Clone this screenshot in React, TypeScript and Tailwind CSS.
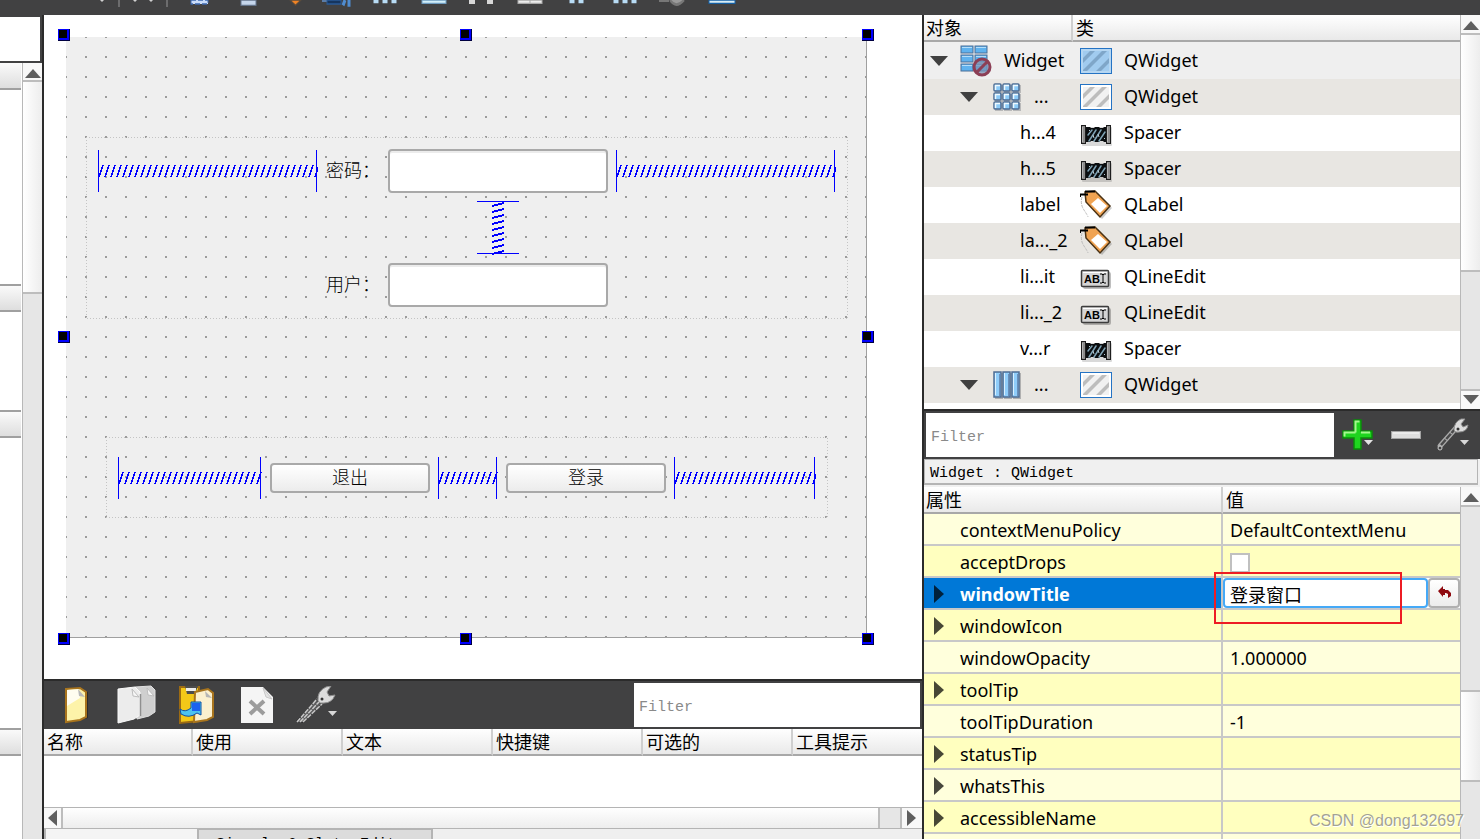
import type { ReactNode } from "react";

type ObjectRow = {
  name: string;
  className: string;
  level: number;
  icon: ReactNode;
  layout?: ReactNode;
};

type PropertyRow = {
  name: string;
  value?: string;
  expandable?: boolean;
  kind?: "check" | "edit";
};

const headerCell =
  "bg-linear-to-b from-white to-[#e9e9e9] border-b-2 border-[#a8a8a8] pt-0.5 text-left font-normal leading-[23px] whitespace-nowrap";

const LayoutBrokenIcon = () => (
  <svg width="32" height="32" viewBox="0 0 32 32">
    {[0, 9, 18].map((y) => (
      <g key={y}>
        <rect x="1" y={y + 1} width="12" height="7" fill="#5fb2ee" stroke="#4a6f98" />
        <rect x="15" y={y + 1} width="12" height="7" fill="#5fb2ee" stroke="#4a6f98" />
        <path d={`M2 ${y + 2.5}h10M16 ${y + 2.5}h10`} stroke="#b4defa" />
      </g>
    ))}
    <circle cx="22" cy="22" r="8" fill="#7a91b5" fillOpacity="0.75" stroke="#8c3f56" strokeWidth="3" />
    <path d="M16.500 27.500L27.500 16.500" stroke="#8c3f56" strokeWidth="3" />
  </svg>
);

const GridLayoutIcon = () => (
  <svg width="28" height="28" viewBox="0 0 28 28">
    {[0, 9, 18].map((y) =>
      [0, 9, 18].map((x) => (
        <g key={`${x}-${y}`}>
          <rect x={x + 2} y={y + 2} width="8" height="8" fill="#b9b9b9" />
          <rect x={x + 1} y={y + 1} width="7" height="7" rx="1" fill="#8ccbf8" stroke="#4f6d94" strokeWidth="1.500" />
          <path d={`M${x + 2.5} ${y + 7}v-4.500h4.500`} stroke="#eef9ff" strokeWidth="1.500" fill="none" />
        </g>
      )),
    )}
  </svg>
);

const HorizontalLayoutIcon = () => (
  <svg width="28" height="28" viewBox="0 0 28 28">
    {[0, 9, 18].map((x) => (
      <g key={x}>
        <rect x={x + 2} y="2" width="8" height="26" fill="#b0b0b0" />
        <rect x={x + 1} y="1" width="7" height="25" fill="#8fcdfa" stroke="#4f6d94" strokeWidth="1.500" />
        <path d={`M${x + 2.5} 2v22`} stroke="#d9f0ff" />
        <path d={`M${x + 6.5} 3v22`} stroke="#6a8fba" />
      </g>
    ))}
  </svg>
);

const WidgetIcon = ({ selected = false }: { selected?: boolean }) => (
  <svg width="32" height="26" viewBox="0 0 32 26">
    <rect x="0.500" y="0.500" width="31" height="25" fill={selected ? "#b5d6f2" : "#fff"} stroke="#2473c4" />
    <rect x="3" y="3" width="26" height="20" fill={selected ? "#a1cbef" : "#f1f1f1"} />
    <path
      d="M3 10V15L15 3H10zM3 23H7L27 3H22L3 22zM16 23H21L29 15V10z"
      fill={selected ? "#7fa6c9" : "#bdbdbd"}
    />
  </svg>
);

const SpacerIcon = () => (
  <svg width="32" height="24" viewBox="0 0 32 24">
    <rect x="2" y="4" width="30" height="19" rx="1" fill="#000" fillOpacity="0.150" />
    <path d="M6 4h4l1 1h3l1-1h4l1 1h3l1-1h3v15h-3l-1-1h-3l-1 1h-4l-1-1h-3l-1 1H6z" fill="#0b0e10" />
    <path
      d="M8 12l4-5M9 18L16 7M14 18L21 7M19 18L25 9"
      stroke="#7fa3b5"
      strokeWidth="1.500"
      strokeLinecap="round"
      fill="none"
    />
    <path d="M9 7l1 1M13 12l1 3M18 11l1 3M24 15l1 1" stroke="#b9cbd4" />
    <rect x="1.500" y="2.500" width="4" height="18" fill="#8b8b8b" stroke="#1e1e1e" />
    <rect x="26.500" y="2.500" width="4" height="18" fill="#8b8b8b" stroke="#1e1e1e" />
    <path d="M2.500 4v15M27.500 4v15" stroke="#b5b5b5" />
  </svg>
);

const LabelIcon = () => (
  <svg width="32" height="30" viewBox="0 0 32 30">
    <path d="M7 4L18 3L32 18L22 29L8 14z" fill="#000" fillOpacity="0.200" />
    <path d="M5 2L15 1L30 16L20 27L6 12z" fill="#f0a352" stroke="#4a3214" strokeWidth="1.500" />
    <path d="M11 14L18 8L27 16L20 23z" fill="#fff" />
    <path d="M0 4.500H8M0 4v3M5 1.500h10" stroke="#000" strokeWidth="2" fill="none" />
    <path d="M2 7Q0 14 4 20T8 27" stroke="#b9b9b9" fill="none" strokeDasharray="3 1" />
  </svg>
);

const LineEditIcon = () => (
  <svg width="32" height="22" viewBox="0 0 32 22">
    <rect x="3" y="4" width="28" height="17" rx="2" fill="#000" fillOpacity="0.250" />
    <rect x="1.500" y="2.500" width="27" height="16" rx="1" fill="#d5d5d5" stroke="#3c3c3c" strokeWidth="1.500" />
    <path d="M3 4.500h24" stroke="#fff" />
    <text x="4" y="15" fontSize="11" fontWeight="700" fontFamily="Liberation Sans, sans-serif" fill="#000">
      AB
    </text>
    <path d="M20 6h2l1 1l1-1h2M23 7v7M20 15h2l1-1l1 1h2" stroke="#000" fill="none" />
  </svg>
);

const WrenchIcon = () => (
  <svg width="44" height="38" viewBox="0 0 44 38">
    <path d="M1 35L22 13L28 17L8 37" fill="#2e2e2f" />
    <path d="M2 36L21 14L26 18L8 36" fill="#5a5a5b" />
    <path d="M2 36L22 13M5 36L24 16M8 36L27 18" stroke="#c9c9c9" strokeWidth="1.500" strokeDasharray="5 1" fill="none" />
    <path
      d="M23 15Q22 5 31 1L36 0L32 6L34 10L40 9Q37 17 29 17Q25 18 23 15z"
      fill="#dcdcdc"
      stroke="#8f8f8f"
    />
    <circle cx="27" cy="13" r="1.500" fill="#333" />
    <path d="M33 25h9l-4.500 5z" fill="#d8d8d8" />
  </svg>
);

const SmallWrenchIcon = () => (
  <svg width="34" height="34" viewBox="0 0 34 34">
    <path d="M4 28L20 10" stroke="#aaa" strokeWidth="5" strokeLinecap="round" />
    <path d="M5 27L19 11" stroke="#4a4a4b" strokeWidth="2.500" strokeDasharray="7 1" />
    <path d="M18 12Q18 4 25 1L29 1L25 6L27 9L32 7Q31 14 23 14Q19 15 18 12z" fill="#dcdcdc" stroke="#8f8f8f" />
    <circle cx="4" cy="30" r="2" fill="#414142" stroke="#ccc" />
    <circle cx="22" cy="11" r="1.500" fill="#333" />
    <path d="M24 22h9l-4.500 5z" fill="#d8d8d8" />
  </svg>
);

const PlusIcon = () => (
  <svg width="32" height="32" viewBox="0 0 32 32">
    <path d="M12 1h7v11h11v7H19v11h-7V19H1v-7h11z" fill="#1fd41f" stroke="#0b8a0b" strokeWidth="1.500" />
    <path d="M13.500 13.500V2.500h4M2.500 17.500v-4h11M19 13.500h9" stroke="#a5f78f" strokeWidth="2" fill="none" />
    <path d="M22 21h9l-4.500 5z" fill="#e3e3e3" />
  </svg>
);

const MinusIcon = () => (
  <svg width="30" height="10" viewBox="0 0 30 10">
    <rect x="0.500" y="1.500" width="29" height="7" fill="#dedede" stroke="#a3a3a3" />
    <path d="M2 3h26" stroke="#f7f7f7" />
  </svg>
);

const NewIcon = () => (
  <svg width="26" height="38" viewBox="0 0 26 38">
    <path d="M4 37L24 32V6L18 4" fill="#2c2c2c" />
    <path d="M2 3L16 2L22 6V31L16 34L2 36z" fill="#fdf3a9" stroke="#a8741d" strokeWidth="2" />
    <path d="M3 4L15 3L16 12L3 20z" fill="#fffdf0" />
    <path d="M14 3L21 11L15 10z" fill="#b9b9b9" />
  </svg>
);

const CopyIcon = () => (
  <svg width="40" height="40" viewBox="0 0 40 40">
    <path d="M18 2L34 1L38 5V27L32 31L20 34z" fill="#cfcfcf" stroke="#e0e0e0" />
    <path d="M1 4L18 2L23 7V30L17 34L1 38z" fill="#ececec" stroke="#fafafa" />
    <path d="M23.500 9v22" stroke="#8f8f8f" strokeWidth="1.500" />
    <path d="M15 4L22 12L16 11zM30 3L37 11L31 10z" fill="#f7f7f7" stroke="#bdbdbd" />
  </svg>
);

const PasteIcon = () => (
  <svg width="36" height="40" viewBox="0 0 36 40">
    <path d="M1 2H20V36L1 38z" fill="#f3c818" stroke="#9c6b13" strokeWidth="2" />
    <path d="M6 1H19L16 9H8z" fill="#4c4c4c" />
    <path d="M7 3H17V6H7z" fill="#ededed" />
    <path d="M16 7L29 4L34 8V32L28 35L15 37z" fill="#fbf0cf" stroke="#a8741d" strokeWidth="2" />
    <path d="M26 6L33 13L27 12z" fill="#b5b5b5" />
    <path d="M1 24Q6 28 12 23V17H22V30L18 28Q10 34 2 29z" fill="#4cc3f0" stroke="#0e4fa5" />
    <rect x="13" y="18" width="8" height="8" fill="#1c62f0" />
  </svg>
);

const DeleteIcon = () => (
  <svg width="32" height="36" viewBox="0 0 32 36">
    <path d="M0 0H22L32 10V36H0z" fill="#f5f5f5" />
    <path d="M22 1L31 12L25 10z" fill="#e3e3e3" stroke="#c9c9c9" />
    <path d="M9 14l14 13M23 14L9 27" stroke="#9c9c9c" strokeWidth="4" />
  </svg>
);

const ResetIcon = () => (
  <svg width="16" height="14" viewBox="0 0 16 14">
    <path d="M2 5L7 0V3H9V4H12L15 7V10L12 12V8L10 7H9V9H7V11z" fill="#8f0a10" />
  </svg>
);

// only the lower edge of the main tool bar is visible
const mainTools: ReactNode[] = [
  <path key="a" d="M15 0h17v3H15z" fill="#c9dcfa" stroke="#3c68b0" strokeDasharray="5 2" />,
  <path key="b" d="M17 0h15v4H17z" fill="#c5d6ec" stroke="#64748b" />,
  <path key="c" d="M18 0h11l-5.500 4z" fill="#f08325" stroke="#5a4b3c" />,
  <g key="d">
    <path d="M8 0h5v1.500H8z" fill="#5a7ca8" />
    <path d="M13 0h14v3H13z" fill="#16355e" stroke="#2a5a96" />
    <path d="M29 4l2-4M35 5V0" stroke="#4f8cd0" strokeWidth="3" />
  </g>,
  <path key="e" d="M14 0v2.500M23 0v2.500M32 0v2.500" stroke="#b8dcf5" strokeWidth="5" />,
  <path key="f" d="M12 0h24v2.500H12z" fill="#d3f0fb" stroke="#6f9cc0" />,
  <path key="g" d="M14 0v3M32 0v3" stroke="#d8d8d8" strokeWidth="6" />,
  <path key="h" d="M12 0h24v2.500H12zM24 0v2.500" fill="#ededed" stroke="#a9a9a9" />,
  <path key="i" d="M18 0v2.500M27 0v2.500" stroke="#b8dcf5" strokeWidth="5" />,
  <path key="j" d="M14 0v2.500M23 0v2.500M32 0v2.500" stroke="#b8dcf5" strokeWidth="5" />,
  <path key="k" d="M9 .5h10M20 0q6 7 14 0" fill="#9a9a9a" stroke="#777" strokeWidth="2" />,
  <path key="l" d="M11 0h26v2.500H11z" fill="#d9eef7" stroke="#1560a5" />,
];

const objects: ObjectRow[] = [
  { name: "Widget", className: "QWidget", level: 0, icon: <WidgetIcon selected />, layout: <LayoutBrokenIcon /> },
  { name: "...", className: "QWidget", level: 1, icon: <WidgetIcon />, layout: <GridLayoutIcon /> },
  { name: "h...4", className: "Spacer", level: 2, icon: <SpacerIcon /> },
  { name: "h...5", className: "Spacer", level: 2, icon: <SpacerIcon /> },
  { name: "label", className: "QLabel", level: 2, icon: <LabelIcon /> },
  { name: "la..._2", className: "QLabel", level: 2, icon: <LabelIcon /> },
  { name: "li...it", className: "QLineEdit", level: 2, icon: <LineEditIcon /> },
  { name: "li..._2", className: "QLineEdit", level: 2, icon: <LineEditIcon /> },
  { name: "v...r", className: "Spacer", level: 2, icon: <SpacerIcon /> },
  { name: "...", className: "QWidget", level: 1, icon: <WidgetIcon />, layout: <HorizontalLayoutIcon /> },
];

const properties: PropertyRow[] = [
  { name: "contextMenuPolicy", value: "DefaultContextMenu" },
  { name: "acceptDrops", kind: "check" },
  { name: "windowTitle", value: "登录窗口", expandable: true, kind: "edit" },
  { name: "windowIcon", expandable: true },
  { name: "windowOpacity", value: "1.000000" },
  { name: "toolTip", expandable: true },
  { name: "toolTipDuration", value: "-1" },
  { name: "statusTip", expandable: true },
  { name: "whatsThis", expandable: true },
  { name: "accessibleName", expandable: true },
  { name: "" },
];

const actionColumns = ["名称", "使用", "文本", "快捷键", "可选的", "工具提示"];

const handles = [
  "-left-2 -top-2",
  "left-1/2 -top-2 -translate-x-1.5",
  "-right-2 -top-2",
  "-left-2 top-1/2 -translate-y-1.5",
  "-right-2 top-1/2 -translate-y-1.5",
  "-left-2 -bottom-2",
  "left-1/2 -bottom-2 -translate-x-1.5",
  "-right-2 -bottom-2",
];

const HSpring = ({ className = "" }: { className?: string }) => (
  <svg className={`h-[42px] ${className}`} shapeRendering="crispEdges">
    <defs>
      <pattern id="coil-h" width="6" height="12" y="15" patternUnits="userSpaceOnUse">
        <path d="M-5 12L-1 0M1 12L5 0M7 12L11 0" stroke="#00f" strokeWidth="1.500" />
      </pattern>
    </defs>
    <rect y="15" width="100%" height="12" fill="url(#coil-h)" />
    <rect width="1" height="42" fill="#00f" />
    <svg x="100%" className="overflow-visible">
      <rect x="-2" width="1" height="42" fill="#00f" />
    </svg>
  </svg>
);

const VSpring = () => (
  <svg className="w-[42px] h-[54px]" shapeRendering="crispEdges">
    <defs>
      <pattern id="coil-v" width="12" height="6" x="15" patternUnits="userSpaceOnUse">
        <path d="M0 -1L12 -4M0 5L12 2M0 11L12 8" stroke="#00f" strokeWidth="2" />
      </pattern>
    </defs>
    <rect x="15" width="12" height="54" fill="url(#coil-v)" />
    <rect width="42" height="1" fill="#00f" />
    <rect y="52" width="42" height="1" fill="#00f" />
  </svg>
);

const DottedFrame = () => (
  <svg className="absolute inset-0 w-full h-full" shapeRendering="crispEdges">
    <rect width="100%" height="100%" fill="none" stroke="#c4c4c4" strokeWidth="2" strokeDasharray="1 2" />
  </svg>
);

const SnapGrid = () => (
  <svg className="absolute inset-0 w-full h-full" shapeRendering="crispEdges">
    <defs>
      <pattern id="snap-grid" x="-1" y="-1" width="20" height="20" patternUnits="userSpaceOnUse">
        <rect width="2" height="2" fill="#9c9c9c" />
      </pattern>
    </defs>
    <rect width="100%" height="100%" fill="url(#snap-grid)" />
  </svg>
);

const Arrow = ({ dir }: { dir: "up" | "down" | "left" | "right" }) => {
  const paths = {
    up: "M8 3L16 12H0z",
    down: "M8 12L16 3H0z",
    left: "M3 8L12 0V16z",
    right: "M12 8L3 0V16z",
  };
  return (
    <svg width="16" height="16" viewBox="0 0 16 16" className="shrink-0">
      <path d={paths[dir]} fill="#5e5e5e" />
    </svg>
  );
};

const Expander = ({ open = false }: { open?: boolean }) =>
  open ? (
    <svg width="18" height="10" viewBox="0 0 18 10">
      <path d="M0 0H18L9 10z" fill="#404040" />
    </svg>
  ) : (
    <svg width="10" height="18" viewBox="0 0 10 18">
      <path d="M0 0V18L10 9z" fill="#000" fillOpacity="0.720" />
    </svg>
  );

const FilterInput = ({ label, className }: { label: string; className: string }) => (
  <input
    type="text"
    aria-label={label}
    placeholder="Filter"
    className={`h-11 bg-white px-[5px] pt-1 outline-none font-['Liberation_Mono','Noto_Sans_CJK_SC',monospace] text-[15px] placeholder:text-[#8a8a8a] ${className}`}
  />
);

const IconButton = ({ label, className, children }: { label: string; className: string; children: ReactNode }) => (
  <button type="button" aria-label={label} className={`flex items-center justify-center ${className}`}>
    {children}
  </button>
);

const MainToolBar = () => (
  <header className="h-[15px] shrink-0 flex bg-[#414142] overflow-hidden">
    <svg width="176" height="8" viewBox="0 0 176 8" className="shrink-0">
      <path d="M100 0h4l-2 2zM133 0h4l-2 2zM149 0h4l-2 2z" fill="#d0d0d0" />
      <path d="M119 0v7M167 0v7" stroke="#6c6c6d" strokeWidth="2" />
    </svg>
    {mainTools.map((glyph, i) => (
      <svg
        key={i}
        height="8"
        viewBox="0 0 48 6"
        preserveAspectRatio="none"
        className={i === 3 ? "-ml-1.5 w-12 shrink-0" : "w-12 shrink-0"}
      >
        {glyph}
      </svg>
    ))}
  </header>
);

const WidgetBox = () => (
  <aside className="w-[42px] shrink-0 flex flex-col bg-[#414142] pt-0.5">
    <input type="text" aria-label="Widget filter" className="h-11 w-10 bg-white outline-none mb-0.5" />
    <div className="flex-1 min-h-0 flex bg-white overflow-hidden">
      <div className="w-[22px] flex flex-col pr-px">
        <div className="h-[27px] shrink-0 bg-linear-to-b from-[#fafafa] to-[#dedede] border-b-2 border-[#a0a0a0]" />
        <div className="h-[194px] shrink-0" />
        <div className="h-7 shrink-0 bg-linear-to-b from-[#fafafa] to-[#dedede] border-y-2 border-[#a0a0a0]" />
        <div className="h-[98px] shrink-0" />
        <div className="h-7 shrink-0 bg-linear-to-b from-[#fafafa] to-[#dedede] border-y-2 border-[#a0a0a0]" />
        <div className="h-[290px] shrink-0" />
        <div className="h-7 shrink-0 bg-linear-to-b from-[#fafafa] to-[#dedede] border-y-2 border-[#a0a0a0]" />
      </div>
      <div className="flex-1 flex flex-col border-l border-[#b8b8b8] bg-[#e6e6e6]">
        <div className="h-[19px] pt-1 flex items-center justify-center bg-[#f8f8f8] border-b-2 border-[#bdbdbd]">
          <Arrow dir="up" />
        </div>
        <div className="h-[212px] bg-linear-to-r from-white to-[#ededed] border-b-2 border-[#bdbdbd]" />
      </div>
    </div>
  </aside>
);

const formLabel = "text-lg leading-6 pb-0.5 font-light whitespace-nowrap text-black";
const formInput =
  "h-11 w-full min-w-0 rounded-[4px] border-2 border-[#a9a9a9] bg-white px-2 shadow-[inset_0_2px_0_#ececec] outline-none";
const formButton =
  "w-40 h-[30px] shrink-0 rounded-[4px] border-2 border-[#a9a9a9] bg-linear-to-b from-white to-[#ececec] pb-0.5 text-lg leading-6 font-light";

const FormCanvas = () => (
  <main className="flex-1 min-h-0 bg-white pt-[22px] pl-[22px] overflow-hidden">
    <div className="relative w-[801px] h-[601px] border-r border-b border-[#a0a0a0] bg-[#efefef]">
      <SnapGrid />
      <div className="absolute left-5 top-[100px] w-[762px] p-3 grid grid-cols-[1fr_54px_1fr_1fr] gap-2 items-center">
        <DottedFrame />
        <HSpring className="w-full" />
        <label htmlFor="password" className={formLabel}>
          密码：
        </label>
        <input id="password" type="text" className={`relative ${formInput}`} />
        <HSpring className="w-full" />
        <div className="col-start-3 flex justify-center">
          <VSpring />
        </div>
        <label htmlFor="user" className={`col-start-2 ${formLabel}`}>
          用户：
        </label>
        <input id="user" type="text" className={`relative ${formInput}`} />
      </div>
      <div className="absolute left-10 top-[400px] w-[722px] h-[81px] px-3 flex gap-2 items-center">
        <DottedFrame />
        <HSpring className="w-36" />
        <button type="button" className={formButton}>
          退出
        </button>
        <HSpring className="w-15" />
        <button type="button" className={formButton}>
          登录
        </button>
        <HSpring className="flex-1 min-w-0" />
      </div>
      {handles.map((place) => (
        <span key={place} className={`absolute size-3 bg-[#00f] border-r border-b border-[#000040] pl-px pt-px ${place}`}>
          <span className="block size-2 bg-black" />
        </span>
      ))}
    </div>
  </main>
);

const ActionEditor = () => (
  <section className="h-40 shrink-0 flex flex-col bg-white overflow-hidden">
    <div className="h-[50px] shrink-0 flex items-center bg-[#414142] border-t-2 border-[#2b2b2b] pl-[3px] pr-0.5">
      <IconButton label="New" className="w-15 h-full">
        <NewIcon />
      </IconButton>
      <IconButton label="Copy" className="w-15 h-full">
        <CopyIcon />
      </IconButton>
      <IconButton label="Paste" className="w-15 h-full">
        <PasteIcon />
      </IconButton>
      <IconButton label="Delete" className="w-15 h-full">
        <DeleteIcon />
      </IconButton>
      <IconButton label="Configure" className="w-15 h-full">
        <WrenchIcon />
      </IconButton>
      <FilterInput label="Action filter" className="w-[286px] ml-auto" />
    </div>
    <table className="w-full table-fixed border-separate border-spacing-0 text-lg leading-6">
      <thead>
        <tr>
          {actionColumns.map((col, i) => (
            <th
              key={col}
              className={`h-[27px] pl-[3px] ${headerCell} ${
                i === actionColumns.length - 1
                  ? ""
                  : i === 0
                    ? "w-[149px] border-r-2 border-r-[#cfcfcf]"
                    : "w-[150px] border-r-2 border-r-[#cfcfcf]"
              }`}
            >
              {col}
            </th>
          ))}
        </tr>
      </thead>
    </table>
    <div className="flex-1" />
    <div className="h-[22px] shrink-0 flex border-y border-[#b4b4b4] bg-[#e6e6e6]">
      <div className="w-[19px] flex items-center justify-center bg-[#f8f8f8] border-r-2 border-[#bdbdbd]">
        <Arrow dir="left" />
      </div>
      <div className="flex-1 bg-linear-to-b from-white to-[#ededed] border-r-2 border-[#bdbdbd]" />
      <div className="w-[22px] border-r-2 border-[#bdbdbd]" />
      <div className="w-5 flex items-center justify-center bg-[#f8f8f8]">
        <Arrow dir="right" />
      </div>
    </div>
    <div className="h-2.5 shrink-0 flex bg-[#efefef] overflow-hidden font-['Liberation_Mono',monospace] text-[15px] leading-5">
      <button type="button" className="w-[153px] h-7 shrink-0 border-l-2 border-[#b4b4b4] bg-[#f4f4f4] pt-2">
        Action Editor
      </button>
      <button
        type="button"
        className="w-[236px] h-7 shrink-0 border-x-2 border-t border-[#b4b4b4] bg-[#dcdcdc] pt-0.5 whitespace-nowrap"
      >
        Signals &amp; Slots Editor
      </button>
    </div>
  </section>
);

const ObjectInspector = () => (
  <section className="h-[394px] shrink-0 flex bg-white">
    <div className="flex-1 min-w-0">
      <table className="w-full table-fixed border-separate border-spacing-0 text-lg leading-6">
        <thead>
          <tr>
            <th className={`w-[149px] h-[27px] pl-0.5 border-r-2 border-r-[#cfcfcf] ${headerCell}`}>对象</th>
            <th className={`pl-[3px] ${headerCell}`}>类</th>
          </tr>
        </thead>
        <tbody>
          {objects.map((row, i) => (
            <tr
              key={i}
              className={i === 0 ? "h-[37px] bg-[#efefef]" : i % 2 === 1 ? "h-9 bg-[#e8e6e2]" : "h-9 bg-white"}
            >
              <td className="p-0">
                <div
                  className={`flex items-center ${
                    row.level === 0 ? "pl-1.5" : row.level === 1 ? "pl-9" : "pl-24"
                  }`}
                >
                  {row.layout && (
                    <>
                      <Expander open />
                      <span className={row.level === 0 ? "ml-3 mr-3" : "ml-[15px] mr-[13px]"}>{row.layout}</span>
                    </>
                  )}
                  <span className="pb-0.5 whitespace-nowrap">{row.name}</span>
                </div>
              </td>
              <td className="p-0 pl-[7px]">
                <div className="flex items-center gap-3">
                  <span className={row.level === 2 && row.className !== "QLabel" ? "pt-1" : ""}>{row.icon}</span>
                  <span className="pb-0.5">{row.className}</span>
                </div>
              </td>
            </tr>
          ))}
        </tbody>
      </table>
    </div>
    <div className="w-5 flex flex-col border-l border-[#b8b8b8] bg-[#e6e6e6]">
      <div className="h-5 pt-1 flex items-center justify-center bg-[#f8f8f8] border-b-2 border-[#bdbdbd]">
        <Arrow dir="up" />
      </div>
      <div className="h-[237px] bg-linear-to-r from-white to-[#ededed] border-b-2 border-[#bdbdbd]" />
      <div className="flex-1" />
      <div className="h-5 flex items-center justify-center bg-[#f8f8f8] border-t-2 border-[#bdbdbd]">
        <Arrow dir="down" />
      </div>
    </div>
  </section>
);

const PropertyEditor = () => (
  <section className="flex-1 min-h-0 flex flex-col bg-[#f0f0f0]">
    <div className="h-[50px] shrink-0 flex items-center bg-[#414142] border-t-2 border-[#2b2b2b] pl-0.5">
      <FilterInput label="Property filter" className="flex-1 min-w-0" />
      <IconButton label="Add property" className="w-12 h-full">
        <PlusIcon />
      </IconButton>
      <IconButton label="Remove property" className="w-12 h-full">
        <MinusIcon />
      </IconButton>
      <IconButton label="Configure editor" className="w-[50px] h-full pr-1">
        <SmallWrenchIcon />
      </IconButton>
    </div>
    <div className="h-[26px] shrink-0 mr-0.5 mb-0.5 border border-b-2 border-[#b4b4b4] pl-[5px] pt-0.5 font-['Liberation_Mono',monospace] text-[15px] leading-6">
      Widget : QWidget
    </div>
    <div className="flex-1 min-h-0 flex overflow-hidden">
      <div className="flex-1 min-w-0">
        <table className="w-full table-fixed border-separate border-spacing-0 text-lg leading-6">
          <thead>
            <tr>
              <th className={`w-[299px] h-[27px] pl-0.5 border-r-2 border-r-[#cfcfcf] ${headerCell}`}>属性</th>
              <th className={`pl-[3px] ${headerCell}`}>值</th>
            </tr>
          </thead>
          <tbody>
            {properties.map((row, i) => {
              const active = row.kind === "edit";
              return (
                <tr key={i} className={i % 2 === 0 && !active ? "h-8 bg-[#ffffdc]" : "h-8 bg-[#ffffbf]"}>
                  <td
                    className={`p-0 pt-0.5 border-b-2 border-r-2 border-[#c8c8c8] ${
                      active ? "bg-[#0078d7] text-white font-bold" : ""
                    }`}
                  >
                    <div className="flex items-center pl-[10px]">
                      <span className="w-[26px]">{row.expandable && <Expander />}</span>
                      {row.name}
                    </div>
                  </td>
                  <td className={`p-0 border-b-2 border-[#c8c8c8] ${active ? "relative" : ""}`}>
                    {row.kind === "check" && (
                      <input
                        type="checkbox"
                        aria-label={row.name}
                        className="block ml-[7px] mt-1 size-5 appearance-none border-2 border-[#c0c0c0] bg-white"
                      />
                    )}
                    {active && (
                      <div className="flex h-[30px] bg-white">
                        <input
                          type="text"
                          aria-label={row.name}
                          defaultValue={row.value}
                          className="flex-1 min-w-0 h-[30px] rounded-[4px] border-2 border-[#45a9f7] bg-white px-[5px] pt-0.5 outline-none"
                        />
                        <button
                          type="button"
                          aria-label="Reset"
                          className="w-8 h-[30px] flex items-center justify-center rounded-[4px] border-2 border-[#b0b0b0] bg-linear-to-b from-white to-[#ececec]"
                        >
                          <ResetIcon />
                        </button>
                        <div className="absolute -left-[9px] -top-1.5 w-[188px] h-[52px] border-2 border-[#ed1c24] pointer-events-none" />
                      </div>
                    )}
                    {!row.kind && <div className="pl-[7px] pt-0.5">{row.value}</div>}
                  </td>
                </tr>
              );
            })}
          </tbody>
        </table>
      </div>
      <div className="w-5 flex flex-col border-l border-[#b8b8b8] bg-[#e6e6e6]">
        <div className="h-5 pt-1 shrink-0 flex items-center justify-center bg-[#f8f8f8] border-b-2 border-[#bdbdbd]">
          <Arrow dir="up" />
        </div>
        <div className="h-[183px] shrink-0" />
        <div className="h-[92px] shrink-0 bg-linear-to-r from-white to-[#ededed] border-y-2 border-[#bdbdbd]" />
      </div>
    </div>
  </section>
);

const App = () => {
  return (
    <div className="relative h-screen overflow-hidden flex flex-col bg-[#efefef] text-black font-['Noto_Sans','Noto_Sans_CJK_SC',sans-serif]">
      <MainToolBar />
      <div className="flex-1 min-h-0 flex">
        <WidgetBox />
        <div className="flex-1 min-w-0 flex flex-col border-x-2 border-[#2b2b2b]">
          <FormCanvas />
          <ActionEditor />
        </div>
        <div className="w-[556px] shrink-0 flex flex-col">
          <ObjectInspector />
          <PropertyEditor />
        </div>
      </div>
      <p className="absolute right-4 bottom-2 text-base leading-5 font-['Liberation_Sans',sans-serif] text-[#a3a394] [text-shadow:1px_1px_0_#fff]">
        CSDN @dong132697
      </p>
    </div>
  );
};

export default App;
